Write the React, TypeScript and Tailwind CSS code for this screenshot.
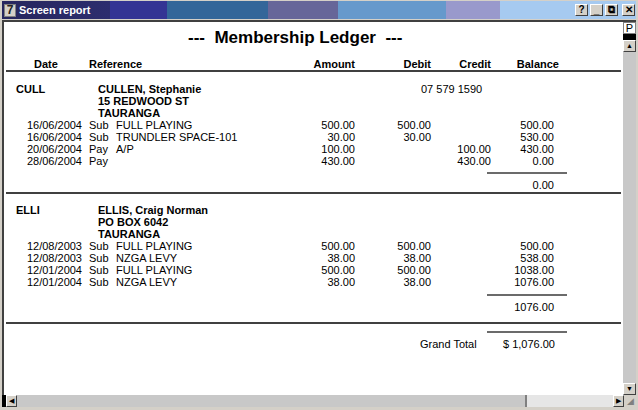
import React from 'react';

const f = { fontFamily: '"Liberation Sans", Arial, sans-serif' };

type Tx = { date: string; type: string; ref: string; amount: string; debit: string; credit: string; balance: string };

const members: { code: string; lines: string[]; phone?: string; tx: Tx[]; total: string }[] = [
  {
    code: 'CULL',
    lines: ['CULLEN, Stephanie', '15 REDWOOD ST', 'TAURANGA'],
    phone: '07 579 1590',
    tx: [
      { date: '16/06/2004', type: 'Sub', ref: 'FULL PLAYING', amount: '500.00', debit: '500.00', credit: '', balance: '500.00' },
      { date: '16/06/2004', type: 'Sub', ref: 'TRUNDLER SPACE-101', amount: '30.00', debit: '30.00', credit: '', balance: '530.00' },
      { date: '20/06/2004', type: 'Pay', ref: 'A/P', amount: '100.00', debit: '', credit: '100.00', balance: '430.00' },
      { date: '28/06/2004', type: 'Pay', ref: '', amount: '430.00', debit: '', credit: '430.00', balance: '0.00' },
    ],
    total: '0.00',
  },
  {
    code: 'ELLI',
    lines: ['ELLIS, Craig Norman', 'PO BOX 6042', 'TAURANGA'],
    tx: [
      { date: '12/08/2003', type: 'Sub', ref: 'FULL PLAYING', amount: '500.00', debit: '500.00', credit: '', balance: '500.00' },
      { date: '12/08/2003', type: 'Sub', ref: 'NZGA LEVY', amount: '38.00', debit: '38.00', credit: '', balance: '538.00' },
      { date: '12/01/2004', type: 'Sub', ref: 'FULL PLAYING', amount: '500.00', debit: '500.00', credit: '', balance: '1038.00' },
      { date: '12/01/2004', type: 'Sub', ref: 'NZGA LEVY', amount: '38.00', debit: '38.00', credit: '', balance: '1076.00' },
    ],
    total: '1076.00',
  },
];

function Row({ t }: { t: Tx }) {
  return (
    <div className="flex h-[12px] leading-[12px] text-[11px] text-black">
      <span className="w-[78px] text-right">{t.date}</span>
      <span className="ml-[7px] w-[27px]">{t.type}</span>
      <span className="w-[154px]">{t.ref}</span>
      <span className="w-[85px] text-right">{t.amount}</span>
      <span className="w-[76px] text-right">{t.debit}</span>
      <span className="w-[60px] text-right">{t.credit}</span>
      <span className="w-[63px] text-right">{t.balance}</span>
    </div>
  );
}

function Underline({ mt }: { mt: string }) {
  return (
    <div className={`flex ${mt}`}>
      <div className="ml-[483px] w-[80px] h-[2px] bg-[#6b6b6b]" />
    </div>
  );
}

export default function App() {
  return (
    <div className="w-[638px] h-[410px] bg-[#d4d0c8] flex flex-col overflow-hidden" style={f}>
      {/* Title bar */}
      <div className="h-[18px] mx-[2px] mt-[1px] flex items-center bg-[linear-gradient(90deg,#26265e_0%,#2d2d6e_17%,#343494_17%,#343494_26%,#336699_26%,#336699_42%,#666699_42%,#666699_53%,#6699cc_53%,#6699cc_70%,#9999cc_70%,#9999cc_78.5%,#a6caf0_78.5%,#a6caf0_100%)]">
        <div className="w-[12px] h-[13px] ml-[2px] bg-[#d4d0c8] border border-[#808080] text-[12px] leading-[11px] text-center text-[#222] font-bold">7</div>
        <span className="ml-[3px] text-white text-[11px] font-bold">Screen report</span>
        <div className="ml-auto flex gap-[2px] mr-[1px]">
          {['?', '_', '⧉'].map((c, i) => (
            <div key={i} className="w-[13px] h-[12px] bg-[#d4d0c8] border-t border-l border-white border-r border-b border-r-[#404040] border-b-[#404040] text-[10px] leading-[10px] text-center font-bold">{c}</div>
          ))}
          <div className="ml-[2px] w-[13px] h-[12px] bg-[#d4d0c8] border-t border-l border-white border-r border-b border-r-[#404040] border-b-[#404040] text-[10px] leading-[10px] text-center font-bold">✕</div>
        </div>
      </div>

      {/* Body */}
      <div className="flex-1 flex mx-[2px] mt-[1px] border-t-2 border-l-2 border-[#404040]">
        <div className="flex-1 bg-white flex flex-col overflow-hidden">
          <div className="h-[32px] flex items-center">
            <span className="ml-[184px] text-[17px] font-bold text-black whitespace-pre">---  Membership Ledger  ---</span>
          </div>
          <div className="mt-[4px] flex h-[12px] leading-[12px] text-[11px] font-bold text-black">
            <span className="ml-[30px] w-[55px]">Date</span>
            <span className="w-[181px]">Reference</span>
            <span className="w-[85px] text-right">Amount</span>
            <span className="w-[76px] text-right">Debit</span>
            <span className="w-[60px] text-right">Credit</span>
            <span className="w-[68px] text-right">Balance</span>
          </div>
          <div className="mx-[2px] h-[2px] bg-[#404040]" />

          {members.map((m, i) => (
            <div key={m.code} className={i === 0 ? 'mt-[11px]' : 'mt-[10px]'}>
              {m.lines.map((l, j) => (
                <div key={j} className="flex h-[12px] leading-[12px] text-[11px] text-black">
                  <span className="ml-[12px] w-[82px] font-bold">{j === 0 ? m.code : ''}</span>
                  <span className="w-[323px] font-bold">{l}</span>
                  <span>{j === 0 ? m.phone : ''}</span>
                </div>
              ))}
              {m.tx.map((t, k) => (
                <Row key={k} t={t} />
              ))}
              <Underline mt={i === 0 ? 'mt-[5px]' : 'mt-[6px]'} />
              <div className="mt-[5px] flex h-[12px] leading-[12px] text-[11px] text-black">
                <span className="w-[550px] text-right">{m.total}</span>
              </div>
              <div className={`${i === 0 ? 'mt-[1px]' : 'mt-[9px]'} mx-[2px] h-[2px] bg-[#404040]`} />
            </div>
          ))}

          <Underline mt="mt-[7px]" />
          <div className="mt-[5px] flex h-[12px] leading-[12px] text-[11px] text-black">
            <span className="ml-[416px]">Grand Total</span>
            <span className="ml-auto mr-[68px]">$ 1,076.00</span>
          </div>
        </div>

        {/* Vertical scrollbar */}
        <div className="w-[13px] flex flex-col bg-[#c8c8c8]">
          <div className="h-[12px] bg-white border border-[#808080] text-[11px] leading-[10px] text-center">P</div>
          <div className="h-[6px] bg-black" />
          <div className="h-[12px] bg-[#d4d0c8] border-t border-l border-white border-r border-b border-r-[#404040] border-b-[#404040] text-[7px] leading-[10px] text-center">▲</div>
          <div className="flex-1 bg-[#c8c8c8]" />
          <div className="h-[12px] bg-[#d4d0c8] border-t border-l border-white border-r border-b border-r-[#404040] border-b-[#404040] text-[7px] leading-[10px] text-center">▼</div>
        </div>
      </div>

      {/* Horizontal scrollbar */}
      <div className="h-[12px] mx-[2px] mb-[3px] flex bg-[#e0e0e0]">
        <div className="w-[4px] bg-black" />
        <div className="w-[11px] bg-[#d4d0c8] border-t border-l border-white border-r border-b border-r-[#404040] border-b-[#404040] text-[7px] leading-[10px] text-center">◀</div>
        <div className="w-[510px] bg-[#c8c8c8] border-r-2 border-[#808080]" />
        <div className="flex-1 bg-[#e6e6e6]" />
        <div className="w-[11px] bg-[#d4d0c8] border-t border-l border-white border-r border-b border-r-[#404040] border-b-[#404040] text-[7px] leading-[10px] text-center">▶</div>
        <div className="w-[12px] bg-[#d4d0c8] text-[9px] leading-[12px] text-center text-[#808080]">◢</div>
      </div>
    </div>
  );
}
